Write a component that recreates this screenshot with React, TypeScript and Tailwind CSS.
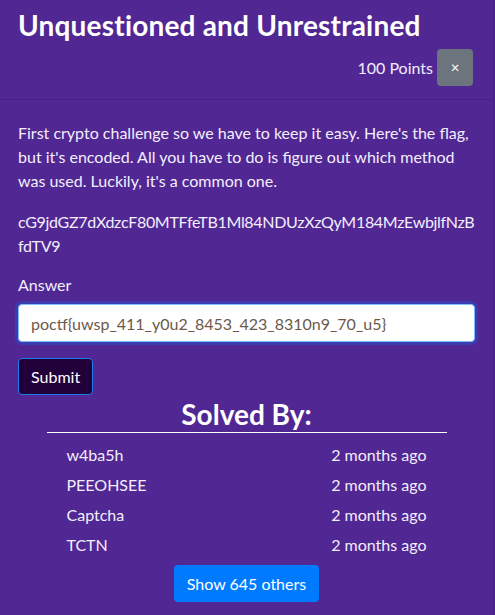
const solvers = [
  { name: 'w4ba5h', when: '2 months ago' },
  { name: 'PEEOHSEE', when: '2 months ago' },
  { name: 'Captcha', when: '2 months ago' },
  { name: 'TCTN', when: '2 months ago' },
]

const App = () => {
  return (
    <div
      className="w-[495px] h-[615px] bg-[#512794] text-[#f3eefc] overflow-hidden"
      style={{ fontFamily: 'Lato, "Noto Sans", sans-serif' }}
    >
      <div className="w-[494px] h-full border-r border-[#43207c]">
        {/* Header */}
        <header className="border-b border-[#45217f] pl-[18px] pr-[20px] pt-[8px] pb-[13px]">
          <h3 className="text-[28px] leading-[34px] font-bold text-white tracking-[0.2px]">
            Unquestioned and Unrestrained
          </h3>
          <div className="flex items-center justify-end gap-[4px] mt-[7px]">
            <span className="text-[16px]">100 Points</span>
            <button className="w-[36px] h-[37px] rounded-[4px] bg-[#6c757d] text-white text-[15px] leading-none flex items-center justify-center">
              ×
            </button>
          </div>
        </header>

        {/* Body */}
        <section className="px-[18px] pt-[21px] text-[16px] leading-[24px]">
          <p>
            First crypto challenge so we have to keep it easy. Here's the flag,
            but it's encoded. All you have to do is figure out which method
            was used. Luckily, it's a common one.
          </p>
          <p className="mt-[17px] break-all tracking-[-0.3px]">
            cG9jdGZ7dXdzcF80MTFfeTB1Ml84NDUzXzQyM184MzEwbjlfNzBfdTV9
          </p>
          <label className="block mt-[15px]">Answer</label>
          <input
            readOnly
            value="poctf{uwsp_411_y0u2_8453_423_8310n9_70_u5}"
            className="mt-[7px] w-full h-[38px] rounded-[4px] bg-white border border-[#80bdff] px-[12px] text-[#6b5a4a] outline-none shadow-[0_0_0_3px_rgba(0,123,255,0.25)]"
          />
          <button className="mt-[16px] h-[37px] px-[12px] rounded-[4px] bg-[#22003a] border border-[#1a7cf0] text-white">
            Submit
          </button>

          {/* Solved by */}
          <div className="flex flex-col items-center">
            <h3 className="text-[28px] leading-[34px] font-bold text-white mt-[2px]">
              Solved By:
            </h3>
            <div className="w-[400px] border-t border-white mt-[1px] pt-[10px]">
              {solvers.map((s) => (
                <div key={s.name} className="flex justify-between px-[20px] h-[30px] leading-[24px]">
                  <span>{s.name}</span>
                  <span>{s.when}</span>
                </div>
              ))}
            </div>
            <button className="mt-[2px] h-[37px] px-[13px] rounded-[4px] bg-[#007bff] text-white">
              Show 645 others
            </button>
          </div>
        </section>
      </div>
    </div>
  )
}

export default App
